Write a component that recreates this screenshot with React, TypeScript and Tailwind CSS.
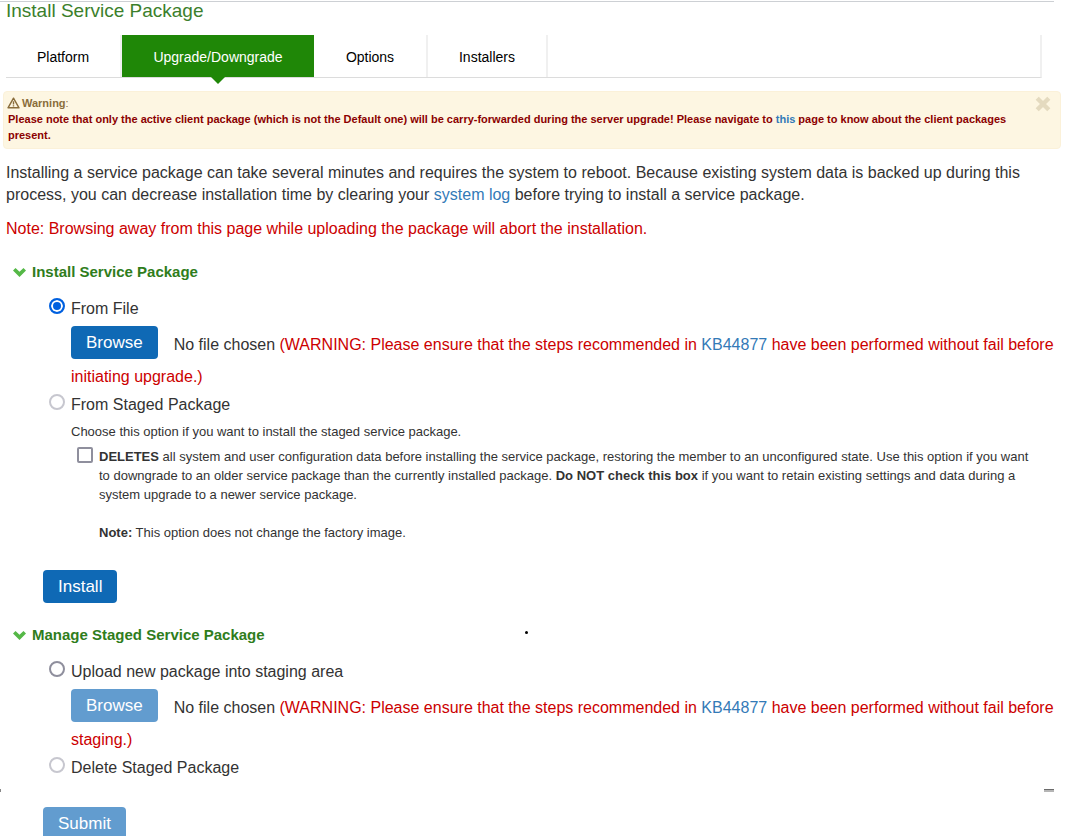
import React from 'react';

const tabs = [
  { name: "Platform", width: "w-[116px]" },
  { name: "Upgrade/Downgrade", width: "w-[192px]" },
  { name: "Options", width: "w-[114px]" },
  { name: "Installers", width: "w-[120px]" }
];
const activeTab = "Upgrade/Downgrade";

const Link: React.FC<{ children: React.ReactNode }> = ({ children }) => (
  <a href="#" className="text-[#337ab7] hover:underline">{children}</a>
);

const Tabs: React.FC = () => (
  <nav className="flex ml-[6px] mr-6 mt-[15px] h-[43px] border-b border-b-[#dcdcdc] border-r-2 border-r-[#f0f0f0] text-sm">
    {tabs.map(({ name, width }) =>
      name === activeTab ? (
        <a key={name} href="#" aria-current="page" className={`${width} relative flex items-center justify-center pt-[2px] bg-[#1f8707] text-white`}>
          {name}
          <svg className="absolute top-full left-1/2 -translate-x-1/2" width="14" height="7" viewBox="0 0 14 7">
            <path d="M0 0h14L7 7z" fill="#1f8707" />
          </svg>
        </a>
      ) : (
        <a key={name} href="#" className={`${width} flex items-center justify-center pt-[2px] border-r-2 border-[#f0f0f0] text-black`}>
          {name}
        </a>
      )
    )}
  </nav>
);

const WarningBox: React.FC = () => (
  <div className="flex items-start justify-between ml-[3px] mr-[5px] mt-[13px] pl-1 pr-[9px] pt-[3px] pb-[5px] rounded border border-[#fbf1d9] bg-[#fdf6e2] text-[11px] leading-4 font-bold">
    <div>
      <p className="flex items-center gap-[2px] text-[#8a6d3b]">
        <svg className="-ml-px" width="13" height="12" viewBox="0 0 13 12" fill="none" stroke="currentColor" strokeWidth="1.4">
          <path d="M6.5 1.2 12 10.8H1z" strokeLinejoin="round" />
          <path d="M6.5 4.2v3.2M6.5 8.3v1.3" />
        </svg>
        <span>Warning<span className="font-normal">:</span></span>
      </p>
      <p className="text-[#8b0000]">
        Please note that only the active client package (which is not the Default one) will be carry-forwarded during the server upgrade! Please navigate to <Link>this</Link> page to know about the client packages present.
      </p>
    </div>
    <button type="button" aria-label="Close" className="shrink-0 ml-5 mt-px text-[#e4dabf]">
      <svg width="16" height="16" viewBox="0 0 16 16" stroke="currentColor" strokeWidth="4.4">
        <path d="M2.2 2.2l11.6 11.6M13.8 2.2 2.2 13.8" />
      </svg>
    </button>
  </div>
);

const SectionTitle: React.FC<{ children: React.ReactNode }> = ({ children }) => (
  <h2 className="flex items-center gap-[6px] pl-[13px] text-[15px] leading-[22px] font-bold text-[#2f7d1c]">
    <svg width="13" height="9" viewBox="0 0 13 9" fill="#55b847">
      <path d="M0 2.6 2.5 0l4 3.8 4-3.8L13 2.6 6.5 9z" />
    </svg>
    {children}
  </h2>
);

interface RadioRowProps {
  name: string;
  label: string;
  checked?: boolean;
  disabled?: boolean;
}

const RadioRow: React.FC<RadioRowProps> = ({ name, label, checked, disabled }) => (
  <label className="flex items-start gap-[6px] leading-[22px]">
    <input
      type="radio"
      name={name}
      defaultChecked={checked}
      disabled={disabled}
      className="appearance-none size-4 rounded-full border-2 border-[#8f8f9d] bg-white checked:border-[#0060df] checked:bg-[#0060df] checked:shadow-[inset_0_0_0_2px_white] disabled:border-[#c7c7cf]"
    />
    {label}
  </label>
);

const buttonClass = "h-[33px] px-[15px] rounded bg-[#0f69b5] text-[17px] leading-[33px] text-white disabled:bg-[#629ccf]";

const FileRow: React.FC<{ action: string; disabled?: boolean }> = ({ action, disabled }) => (
  <div className="ml-[22px] mt-[6px] mb-px">
    <button type="button" disabled={disabled} className={`${buttonClass} float-left mr-4`}>Browse</button>
    <p className="pt-[3px] leading-8">
      No file chosen{' '}
      <span className="text-[#cc0000]">
        (WARNING: Please ensure that the steps recommended in <Link>KB44877</Link> have been performed without fail before {action}.)
      </span>
    </p>
  </div>
);

export default function App() {
  return (
    <main className="min-h-screen bg-white font-['Liberation_Sans',Arial,sans-serif] text-base text-[#333333]">
      <header className="pt-px mr-3">
        <h1 className="pl-[6px] border-t border-[#cdd0d4] text-[19px] leading-[18px] text-[#3c7f2c]">Install Service Package</h1>
      </header>

      <Tabs />
      <WarningBox />

      <div className="px-[6px] mt-[13px] leading-[22px]">
        <p className="mr-5">
          Installing a service package can take several minutes and requires the system to reboot. Because existing system data is backed up during this process, you can decrease installation time by clearing your <Link>system log</Link> before trying to install a service package.
        </p>
        <p className="mt-3 text-[#cc0000]">Note: Browsing away from this page while uploading the package will abort the installation.</p>
      </div>

      <form className="mt-[21px]">
        <section>
          <SectionTitle>Install Service Package</SectionTitle>
          <div className="ml-[49px] mt-[15px]">
            <RadioRow name="source" label="From File" checked />
            <FileRow action="initiating upgrade" />
            <RadioRow name="source" label="From Staged Package" disabled />
            <div className="ml-[22px] mr-6 mt-[6px] text-[13px] leading-[19px]">
              <p>Choose this option if you want to install the staged service package.</p>
              <label className="flex items-start gap-[6px] ml-[6px] mt-[6px]">
                <input type="checkbox" className="appearance-none shrink-0 size-4 rounded-xs border-2 border-[#8f8f9d] bg-white checked:bg-[#0060df]" />
                <span>
                  <b>DELETES</b> all system and user configuration data before installing the service package, restoring the member to an unconfigured state. Use this option if you want to downgrade to an older service package than the currently installed package. <b>Do NOT check this box</b> if you want to retain existing settings and data during a system upgrade to a newer service package.
                </span>
              </label>
              <p className="ml-7 mt-[19px]"><b>Note:</b> This option does not change the factory image.</p>
            </div>
          </div>
          <button type="button" className={`${buttonClass} ml-[43px] mt-7`}>Install</button>
        </section>

        <section className="mt-[21px]">
          <div className="flex items-center">
            <div className="w-[525px]">
              <SectionTitle>Manage Staged Service Package</SectionTitle>
            </div>
            <span className="size-[3px] mb-[6px] rounded-full bg-black" />
          </div>
          <div className="ml-[49px] mt-[15px]">
            <RadioRow name="staging" label="Upload new package into staging area" />
            <FileRow action="staging" disabled />
            <RadioRow name="staging" label="Delete Staged Package" disabled />
          </div>
          <div className="flex justify-between mt-[10px] mr-3">
            <span className="w-px h-[3px] bg-[#888888]" />
            <span className="w-[10px] h-[3px] border-t border-[#6b6b6b] bg-[#b5b5b5]" />
          </div>
          <button type="button" disabled className={`${buttonClass} ml-[43px] mt-[15px]`}>Submit</button>
        </section>
      </form>
    </main>
  );
}
